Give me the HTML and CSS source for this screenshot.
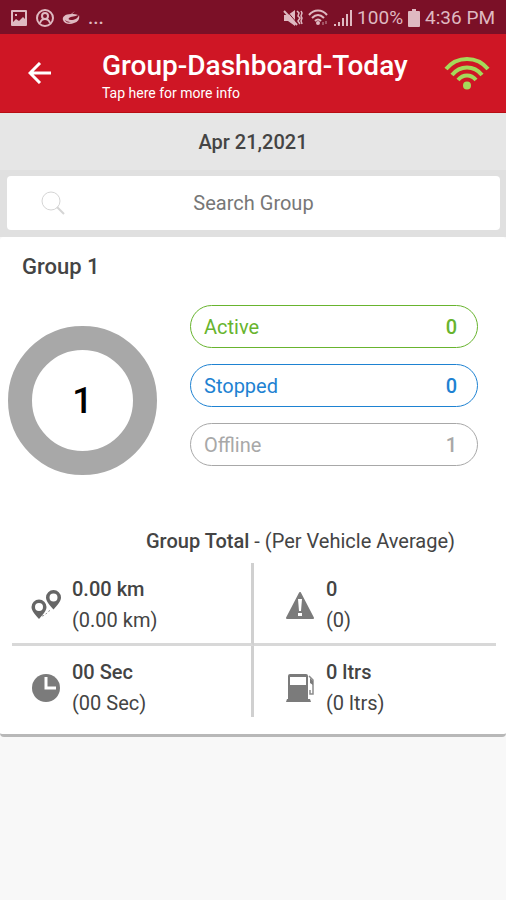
FILE: index.html
```html
<!DOCTYPE html>
<html lang="en">
<head>
  <meta charset="UTF-8">
  <meta name="viewport" content="width=device-width, initial-scale=1">
  <title>Group Dashboard</title>
  <link rel="stylesheet" href="styles.css">
</head>
<body>

<!-- Status bar -->
<div class="status-bar">
  <div class="status-left">
    <svg width="18" height="18" viewBox="0 0 18 18">
      <path fill="currentColor" fill-rule="evenodd" d="M2 1h14a1 1 0 0 1 1 1v14a1 1 0 0 1-1 1H2a1 1 0 0 1-1-1V2a1 1 0 0 1 1-1zM3 3v10l3-3 3 2 4-4 2 2V3zM5 5h2v2H5z"/>
    </svg>
    <svg width="18" height="18" viewBox="0 0 18 18" fill="none" stroke="currentColor" stroke-width="2">
      <circle cx="9" cy="9" r="8"/>
      <circle cx="9" cy="7" r="3"/>
      <path d="M4 14c1-3 3-4 5-4s4 1 5 4"/>
    </svg>
    <svg width="18" height="18" viewBox="0 0 18 18">
      <path fill="currentColor" fill-rule="evenodd" d="M13 2L9 5C3 5 0 8 1 11c1 4 7 5 11 3 4-1 6-4 5-8-1 3-4 5-8 5-2 0-3-1-2-2 2-2 6-1 9-3-2-1-4-1-6-1zM3 10c0 2 3 3 6 3-3 1-6 0-6-3z"/>
    </svg>
    <span class="dots">...</span>
  </div>
  <div class="status-right">
    <svg width="20" height="18" viewBox="0 0 20 18">
      <path fill="currentColor" d="M1 6h4l7-5v16l-7-5H1z"/>
      <path fill="none" stroke="#7b1027" d="M3 1l11 13"/>
      <path fill="none" stroke="currentColor" stroke-width="2" d="M1 2l13 14"/>
      <path fill="none" stroke="currentColor" stroke-width="1.500" d="M14 2l2 2-1 3 2 2-2 3 2 3M18 2l1 2-1 3 1 2-1 3 1 3"/>
    </svg>
    <svg width="21" height="18" viewBox="0 0 21 18" fill="none" stroke="currentColor" stroke-width="2">
      <path d="M1 6c5-6 13-6 18 0M4 9c4-4 8-4 12 0M7 12c2-2 4-2 6 0"/>
      <circle cx="10" cy="14" r="1"/>
      <path d="M15 13v3M18 12v3" opacity=".4"/>
    </svg>
    <svg width="18" height="18" viewBox="0 0 18 18" fill="none" stroke="currentColor" stroke-width="2">
      <path d="M1 17v-2M5 17v-4M9 17V9M13 17V5M17 17V1"/>
    </svg>
    <span>100%</span>
    <svg width="12" height="18" viewBox="0 0 12 18">
      <path fill="currentColor" d="M4 0h4v2h3a1 1 0 0 1 1 1v14a1 1 0 0 1-1 1H1a1 1 0 0 1-1-1V3a1 1 0 0 1 1-1h3z"/>
    </svg>
    <span>4:36 PM</span>
  </div>
</div>

<header class="app-bar">
  <button class="back-btn" aria-label="Back">
    <svg width="24" height="22" viewBox="0 0 24 22" fill="none" stroke="currentColor" stroke-width="3">
      <path d="M12 1L2 11l10 10M2 11h21"/>
    </svg>
  </button>
  <div class="app-title">
    <h1>Group-Dashboard-Today</h1>
    <p>Tap here for more info</p>
  </div>
  <svg class="wifi" width="46" height="34" viewBox="0 0 46 34" fill="none" stroke="currentColor" stroke-width="4">
    <path d="M2 13C13-.5 33-.5 44 13M8 19C16 9 30 9 38 19M14 24C19 18 27 18 32 24"/>
    <circle cx="23" cy="29.500" r="4" fill="currentColor" stroke="none"/>
  </svg>
</header>

<div class="date">Apr 21,2021</div>

<div class="search-area">
  <label class="search-box">
    <svg width="24" height="24" viewBox="0 0 24 24" fill="none" stroke="currentColor">
      <circle cx="10" cy="10" r="9"/>
      <path d="M16 16l7 7" stroke-width="2"/>
    </svg>
    <input type="text" placeholder="Search Group" aria-label="Search Group">
  </label>
</div>

<main class="card">
  <h2>Group 1</h2>

  <div class="summary">
    <div class="ring">1</div>
    <div class="states">
      <button class="state active"><span>Active</span><b>0</b></button>
      <button class="state stopped"><span>Stopped</span><b>0</b></button>
      <button class="state offline"><span>Offline</span><b>1</b></button>
    </div>
  </div>

  <p class="total-title"><b>Group Total</b> - (Per Vehicle Average)</p>

  <div class="totals">
    <div class="total">
      <svg width="30" height="30" viewBox="0 0 30 30">
        <path fill="#666" fill-rule="evenodd" d="M22.500 0a7.500 7.500 0 0 1 7.500 7.500c0 4-4 8-7.500 12-3.500-4-7.500-8-7.500-12A7.500 7.500 0 0 1 22.500 0zm0 3.500a4 4 0 1 0 0 8 4 4 0 0 0 0-8zM8 9.500a7.500 7.500 0 0 1 7.500 7.500c0 4-4 8-7.500 12-3.500-4-7.500-8-7.500-12A7.500 7.500 0 0 1 8 9.500zm0 3.500a4 4 0 1 0 0 8 4 4 0 0 0 0-8z"/>
        <path fill="none" stroke="#909090" stroke-dasharray="2 2" d="M11 26c5-1 4-4 9-6"/>
      </svg>
      <div><b>0.00 km</b><span>(0.00 km)</span></div>
    </div>
    <div class="total">
      <svg width="30" height="30" viewBox="0 0 30 30">
        <path fill="#7b7b7b" stroke="#7b7b7b" stroke-width="2" stroke-linejoin="round" d="M15 3L28 28H2z"/>
        <path fill="#fff" d="M13 9h4l-1 12h-2zM13 23h4v3h-4z"/>
      </svg>
      <div><b>0</b><span>(0)</span></div>
    </div>
    <div class="total">
      <svg width="30" height="30" viewBox="0 0 30 30">
        <circle cx="15" cy="15" r="14" fill="#7b7b7b"/>
        <path fill="none" stroke="#fff" stroke-width="3" d="M15 4v11h10"/>
      </svg>
      <div><b>00 Sec</b><span>(00 Sec)</span></div>
    </div>
    <div class="total">
      <svg width="30" height="30" viewBox="0 0 30 30">
        <path fill="#7b7b7b" fill-rule="evenodd" d="M5 1h16a2 2 0 0 1 2 2v23h2l1 3H1l1-3h1V3a2 2 0 0 1 2-2zm0 3v8h16V4z"/>
        <path fill="none" stroke="#8c8c8c" stroke-width="1.500" d="M24 3l4 4v14h-3v-4"/>
        <path fill="#7b7b7b" d="M25 5l3 3v4l-3-2z"/>
      </svg>
      <div><b>0 ltrs</b><span>(0 ltrs)</span></div>
    </div>
  </div>
</main>

</body>
</html>
```

FILE: styles.css
```css
* {
  box-sizing: border-box;
}
body {
  margin: 0;
  font-family: Roboto, "Liberation Sans", sans-serif;
  font-size: 20px;
  line-height: 24px;
  color: #444;
  background: #f8f8f8;
}
h1, h2, p {
  margin: 0;
}
b, h1, h2 {
  font-weight: 500;
}
svg {
  display: block;
  flex: none;
}
button {
  font: inherit;
  cursor: pointer;
}

/* Status bar */
.status-bar {
  display: flex;
  justify-content: space-between;
  align-items: center;
  height: 34px;
  padding: 2px 11px 0 10px;
  font-size: 19px;
  color: #dfb9c1;
  background: #7b1027;
}
.status-left {
  display: flex;
  align-items: center;
  gap: 8px;
}
.status-right {
  display: flex;
  align-items: center;
  gap: 5px;
}
.dots {
  font-weight: 500;
}

/* Header */
.app-bar {
  display: flex;
  align-items: center;
  height: 79px;
  padding: 0 16px 0 20px;
  color: #fff;
  background: #cf1625;
  border-bottom: 1px solid #b80d12;
}
.back-btn {
  width: 40px;
  padding: 8px;
  border: 0;
  color: inherit;
  background: none;
}
.app-title {
  flex: 1;
  padding: 6px 0 0 42px;
}
.app-title h1 {
  font-size: 28px;
  line-height: 34px;
}
.app-title p {
  font-size: 14px;
  line-height: 20px;
}
.wifi {
  color: #a5d95a;
}

.date {
  padding: 17px 0 16px;
  font-weight: 500;
  text-align: center;
  background: #e6e6e6;
}

/* Search */
.search-area {
  padding: 6px 6px 7px 7px;
  background: #e0e0e0;
}
.search-box {
  display: flex;
  align-items: center;
  height: 54px;
  padding: 0 34px;
  color: #d5d5d5;
  background: #fff;
  border-radius: 4px;
}
.search-box input {
  flex: 1;
  min-width: 0;
  padding: 0 24px 0 0;
  border: 0;
  outline: 0;
  font: inherit;
  color: #444;
  text-align: center;
  background: none;
}
.search-box input::placeholder {
  color: #777;
  opacity: 1;
}

/* Group card */
.card {
  padding: 18px 10px 17px 8px;
  background: #fff;
  border-bottom: 3px solid #b8b8b8;
  border-radius: 4px;
}
.card h2 {
  padding-left: 14px;
  font-size: 22px;
}
.summary {
  display: flex;
  align-items: flex-start;
  gap: 33px;
  padding: 26px 18px 0 0;
}
.ring {
  display: flex;
  align-items: center;
  justify-content: center;
  flex: none;
  width: 149px;
  height: 149px;
  margin-top: 21px;
  border: 24px solid #a8a8a8;
  border-radius: 50%;
  font-size: 36px;
  font-weight: 500;
  color: #000;
}
.states {
  display: flex;
  flex-direction: column;
  flex: 1;
  gap: 16px;
}
.state {
  display: flex;
  justify-content: space-between;
  align-items: center;
  height: 43px;
  padding: 0 20px 0 13px;
  border: 1px solid;
  border-radius: 22px;
  background: #fff;
}
.active {
  color: #68b42e;
}
.stopped {
  color: #1e82d2;
}
.offline {
  color: #a8a8a8;
}
.total-title {
  padding: 54px 41px 10px 0;
  text-align: right;
}

/* Totals grid */
.totals {
  display: grid;
  grid-template-columns: 1fr 1fr;
  margin-left: 4px;
}
.total {
  display: flex;
  align-items: center;
  gap: 11px;
  padding: 14px 0 11px 31px;
  border-bottom: 3px solid #d8d8d8;
}
.total:nth-child(odd) {
  padding-left: 19px;
  border-right: 3px solid #d0d0d0;
}
.total:nth-child(n+3) {
  padding-bottom: 2px;
  border-bottom: 0;
}
.total b, .total span {
  display: block;
}
.total b {
  margin-bottom: 7px;
}
```
